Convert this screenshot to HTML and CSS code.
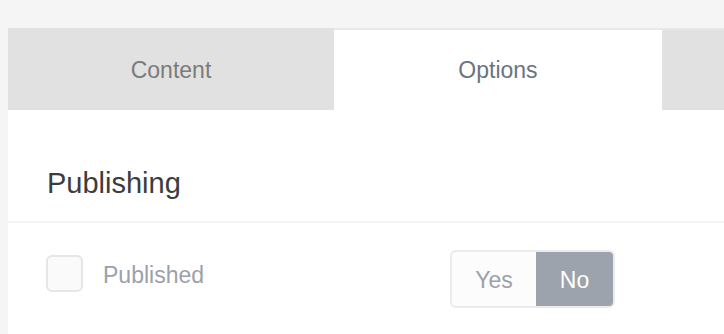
FILE: index.html
```html
<!DOCTYPE html>
<html lang="en">
<head>
    <meta charset="UTF-8">
    <meta name="viewport" content="width=device-width, initial-scale=1.0">
    <title>Options</title>
    <link rel="stylesheet" href="styles.css">
</head>
<body>
    <div class="panel">
        <div class="tabs">
            <div class="tab">Content</div>
            <div class="tab tab-active">Options</div>
            <div class="tab"></div>
        </div>

        <div class="section-head">
            <h2>Publishing</h2>
        </div>

        <div class="field-row">
            <label class="check">
                <span class="check-box"></span>
                <span class="check-label">Published</span>
            </label>

            <div class="toggle">
                <span class="toggle-opt">Yes</span>
                <span class="toggle-opt toggle-on">No</span>
            </div>
        </div>
    </div>
</body>
</html>
```

FILE: styles.css
```css
/* Reset some basic styles */
* {
    margin: 0;
    padding: 0;
    box-sizing: border-box;
}

body {
    background: #f5f5f5;
    font-family: 'Liberation Sans', Arial, sans-serif;
    height: 100vh;
    overflow: hidden;
}

.panel {
    margin: 28px 0 0 8px;
    background: #fff;
    border-top: 2px solid #e8e8e8;
    height: calc(100vh - 28px);
}

.tabs {
    display: grid;
    grid-template-columns: 326px 328px 1fr;
}

.tab {
    height: 80px;
    line-height: 80px;
    text-align: center;
    font-size: 23px;
    color: #7b7b7b;
    background: #e1e1e1;
}

    .tab:first-child {
        margin-top: -2px;
        height: 82px;
        line-height: 84px;
    }

.tab-active {
    background: #fff;
    color: #6b7380;
}

.section-head {
    padding: 57px 0 21px 39px;
    border-bottom: 2px solid #f5f5f5;
}

    .section-head h2 {
        font-size: 29px;
        line-height: 33px;
        font-weight: normal;
        color: #3c3c3e;
    }

.field-row {
    display: flex;
    align-items: flex-start;
    padding: 27px 0 0 38px;
}

.check {
    display: flex;
    align-items: center;
    gap: 20px;
    width: 404px;
    margin-top: 5px;
}

.check-box {
    width: 37px;
    height: 37px;
    border: 2px solid #e6e6e6;
    border-radius: 6px;
    background: #fafafa;
}

.check-label {
    font-size: 23px;
    color: #9ba1ab;
    padding-top: 4px;
}

.toggle {
    display: flex;
    width: 165px;
    height: 58px;
    border: 2px solid #ebebeb;
    border-radius: 6px;
    background: #fcfcfc;
}

.toggle-opt {
    width: 84px;
    line-height: 56px;
    text-align: center;
    font-size: 23px;
    color: #9ba1ab;
}

.toggle-on {
    width: 77px;
    background: #9ca3ac;
    color: #fff;
    border-radius: 0 4px 4px 0;
}
```
